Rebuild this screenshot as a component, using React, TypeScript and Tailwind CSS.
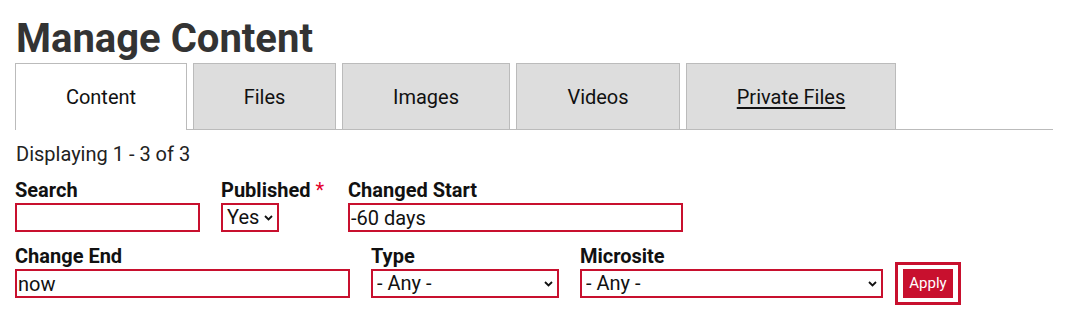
import React from "react";

const RED = "border-[#c8102e]";

function Chevron() {
  return (
    <svg
      className="pointer-events-none absolute right-[6px] top-1/2 -translate-y-1/2"
      width="9"
      height="6"
      viewBox="0 0 9 6"
    >
      <path d="M1 1l3.5 3.5L8 1" fill="none" stroke="#111" strokeWidth="1.8" />
    </svg>
  );
}

function Select({ value, width }: { value: string; width: string }) {
  return (
    <div className={`relative ${width}`}>
      <select
        className={`w-full h-[29px] appearance-none border-2 ${RED} bg-white pl-[4px] pr-[18px] text-[20px] leading-[25px] text-[#111] outline-none`}
        defaultValue={value}
      >
        <option>{value}</option>
      </select>
      <Chevron />
    </div>
  );
}

function Field({
  label,
  children,
  className,
  required,
}: {
  label: string;
  children: React.ReactNode;
  className: string;
  required?: boolean;
}) {
  return (
    <div className={`flex flex-col ${className}`}>
      <label className="text-[20px] leading-[26px] font-bold text-[#111] whitespace-nowrap">
        {label}
        {required && <span className="text-[#e4002b] font-normal"> *</span>}
      </label>
      {children}
    </div>
  );
}

function TextInput({ value, width }: { value: string; width: string }) {
  return (
    <input
      className={`${width} h-[29px] border-2 ${RED} bg-white pl-[1px] text-[20px] leading-[25px] text-[#111] outline-none`}
      defaultValue={value}
    />
  );
}

const tabs = [
  { name: "Content", w: "w-[172px]", active: true },
  { name: "Files", w: "w-[143px]" },
  { name: "Images", w: "w-[168px]" },
  { name: "Videos", w: "w-[164px]" },
  { name: "Private Files", w: "w-[210px]", underline: true },
];

export default function App() {
  return (
    <div
      className="bg-white w-[1067px] h-[325px] pl-[15px] text-[#111]"
      style={{ fontFamily: "Roboto, 'Noto Sans', sans-serif" }}
    >
      <h1 className="pt-[15px] text-[40px] leading-[48px] font-bold text-[#333] pl-[1px]">
        Manage Content
      </h1>
      <div className="flex gap-[6px] w-[1038px] h-[67px] border-b border-[#bbb]">
        {tabs.map((t) => (
          <div
            key={t.name}
            className={`${t.w} flex items-center justify-center border border-b-0 border-[#bbb] text-[20px] text-[#111] ${
              t.active ? "bg-white h-[67px]" : "bg-[#ddd] h-[66px]"
            } ${t.underline ? "underline underline-offset-[3px]" : ""}`}
          >
            {t.name}
          </div>
        ))}
      </div>
      <p className="mt-[11px] text-[20px] leading-[27px] pl-[1px] text-[#222]">
        Displaying 1 - 3 of 3
      </p>
      <div className="mt-[9px] flex">
        <Field label="Search" className="w-[185px] mr-[21px]">
          <TextInput value="" width="w-[185px]" />
        </Field>
        <Field label="Published" required className="w-[106px] mr-[21px]">
          <Select value="Yes" width="w-[58px]" />
        </Field>
        <Field label="Changed Start" className="w-[335px]">
          <TextInput value="-60 days" width="w-[335px]" />
        </Field>
      </div>
      <div className="mt-[11px] flex items-end">
        <Field label="Change End" className="w-[335px] mr-[21px]">
          <TextInput value="now" width="w-[335px]" />
        </Field>
        <Field label="Type" className="w-[188px] mr-[21px]">
          <Select value="- Any -" width="w-[188px]" />
        </Field>
        <Field label="Microsite" className="w-[303px] mr-[12px]">
          <Select value="- Any -" width="w-[303px]" />
        </Field>
        <div className={`-mb-[7px] border-[3px] ${RED} px-[5px] py-[4px] bg-white`}>
          <button className="w-[50px] h-[29px] bg-[#c8102e] text-white text-[15px] leading-none">
            Apply
          </button>
        </div>
      </div>
    </div>
  );
}
